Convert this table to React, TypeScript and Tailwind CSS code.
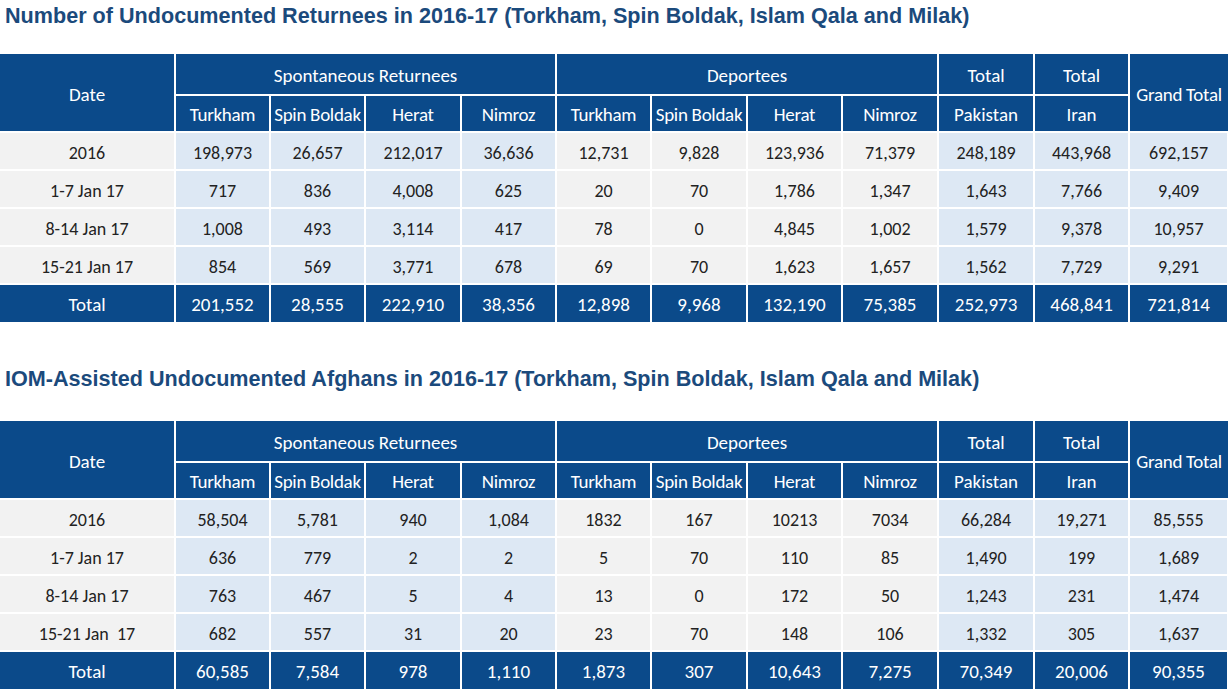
const cols = [175, 95, 95, 96, 95, 95, 96, 95, 96, 96, 95, 99]

type Row = string[]

const tableOne: Row[] = [
  ["2016", "198,973", "26,657", "212,017", "36,636", "12,731", "9,828", "123,936", "71,379", "248,189", "443,968", "692,157"],
  ["1-7 Jan 17", "717", "836", "4,008", "625", "20", "70", "1,786", "1,347", "1,643", "7,766", "9,409"],
  ["8-14 Jan 17", "1,008", "493", "3,114", "417", "78", "0", "4,845", "1,002", "1,579", "9,378", "10,957"],
  ["15-21 Jan 17", "854", "569", "3,771", "678", "69", "70", "1,623", "1,657", "1,562", "7,729", "9,291"],
]
const totalOne = ["Total", "201,552", "28,555", "222,910", "38,356", "12,898", "9,968", "132,190", "75,385", "252,973", "468,841", "721,814"]

const tableTwo: Row[] = [
  ["2016", "58,504", "5,781", "940", "1,084", "1832", "167", "10213", "7034", "66,284", "19,271", "85,555"],
  ["1-7 Jan 17", "636", "779", "2", "2", "5", "70", "110", "85", "1,490", "199", "1,689"],
  ["8-14 Jan 17", "763", "467", "5", "4", "13", "0", "172", "50", "1,243", "231", "1,474"],
  ["15-21 Jan\u00a0 17", "682", "557", "31", "20", "23", "70", "148", "106", "1,332", "305", "1,637"],
]
const totalTwo = ["Total", "60,585", "7,584", "978", "1,110", "1,873", "307", "10,643", "7,275", "70,349", "20,006", "90,355"]

const subCols = ["Turkham", "Spin Boldak", "Herat", "Nimroz"]

// columns 0 and 5-8 are grey, the rest light blue
function cellBg(i: number) {
  if (i === 0 || (i >= 5 && i <= 8)) return "bg-[#f2f2f2]"
  return "bg-[#dde8f4]"
}

function DataTable({ rows, total }: { rows: Row[]; total: string[] }) {
  const th = "border-2 border-white bg-[#0b4a8a] text-white font-normal text-[19px] p-0 text-center"
  return (
    <table className="table-fixed border-collapse w-[1228px] text-[18px] leading-none">
      <colgroup>
        {cols.map((w, i) => (
          <col key={i} style={{ width: w }} />
        ))}
      </colgroup>
      <thead>
        <tr className="h-[42px]">
          <th rowSpan={2} className={`${th} border-l-0 pt-[4px]`}>Date</th>
          <th colSpan={4} className={`${th} pt-[2px]`}>Spontaneous Returnees</th>
          <th colSpan={4} className={`${th} pt-[2px]`}>Deportees</th>
          <th className={`${th} pt-[2px]`}>Total</th>
          <th className={`${th} pt-[2px]`}>Total</th>
          <th rowSpan={2} className={`${th} border-r-0 whitespace-nowrap tracking-[-0.3px] pt-[4px]`}>Grand Total</th>
        </tr>
        <tr className="h-[37px]">
          {[...subCols, ...subCols].map((c, i) => (
            <th key={i} className={`${th} whitespace-nowrap tracking-[-0.3px] pt-[2px]`}>{c}</th>
          ))}
          <th className={`${th} pt-[2px]`}>Pakistan</th>
          <th className={`${th} pt-[2px]`}>Iran</th>
        </tr>
      </thead>
      <tbody>
        {rows.map((r, ri) => (
          <tr key={ri} className="h-[38px]">
            {r.map((v, i) => (
              <td key={i} className={`border-2 border-white text-center text-[#222] whitespace-pre pt-[3px] ${cellBg(i)} ${i === 0 ? "border-l-0" : ""}`}>
                {v}
              </td>
            ))}
          </tr>
        ))}
        <tr className="h-[38px]">
          {total.map((v, i) => (
            <td key={i} className={`border-2 border-white border-b-0 bg-[#0b4a8a] text-white text-[19px] text-center pt-[2px] ${i === 0 ? "border-l-0" : ""}`}>
              {v}
            </td>
          ))}
        </tr>
      </tbody>
    </table>
  )
}

export default function App() {
  return (
    <div className="w-[1228px] h-[690px] overflow-hidden bg-white font-['Carlito','Lato','Liberation_Sans',sans-serif]">
      <h2 className="h-[52px] pl-[5px] pt-[4px] font-['Liberation_Sans',Arial,sans-serif] font-bold text-[21.6px] leading-[24px] text-[#1b4a7c]">
        Number of Undocumented Returnees in 2016-17 (Torkham, Spin Boldak, Islam Qala and Milak)
      </h2>
      <DataTable rows={tableOne} total={totalOne} />
      <h2 className="h-[97px] pl-[5px] pt-[45px] font-['Liberation_Sans',Arial,sans-serif] font-bold text-[21.6px] leading-[24px] text-[#1b4a7c]">
        IOM-Assisted Undocumented Afghans in 2016-17 (Torkham, Spin Boldak, Islam Qala and Milak)
      </h2>
      <DataTable rows={tableTwo} total={totalTwo} />
    </div>
  )
}
